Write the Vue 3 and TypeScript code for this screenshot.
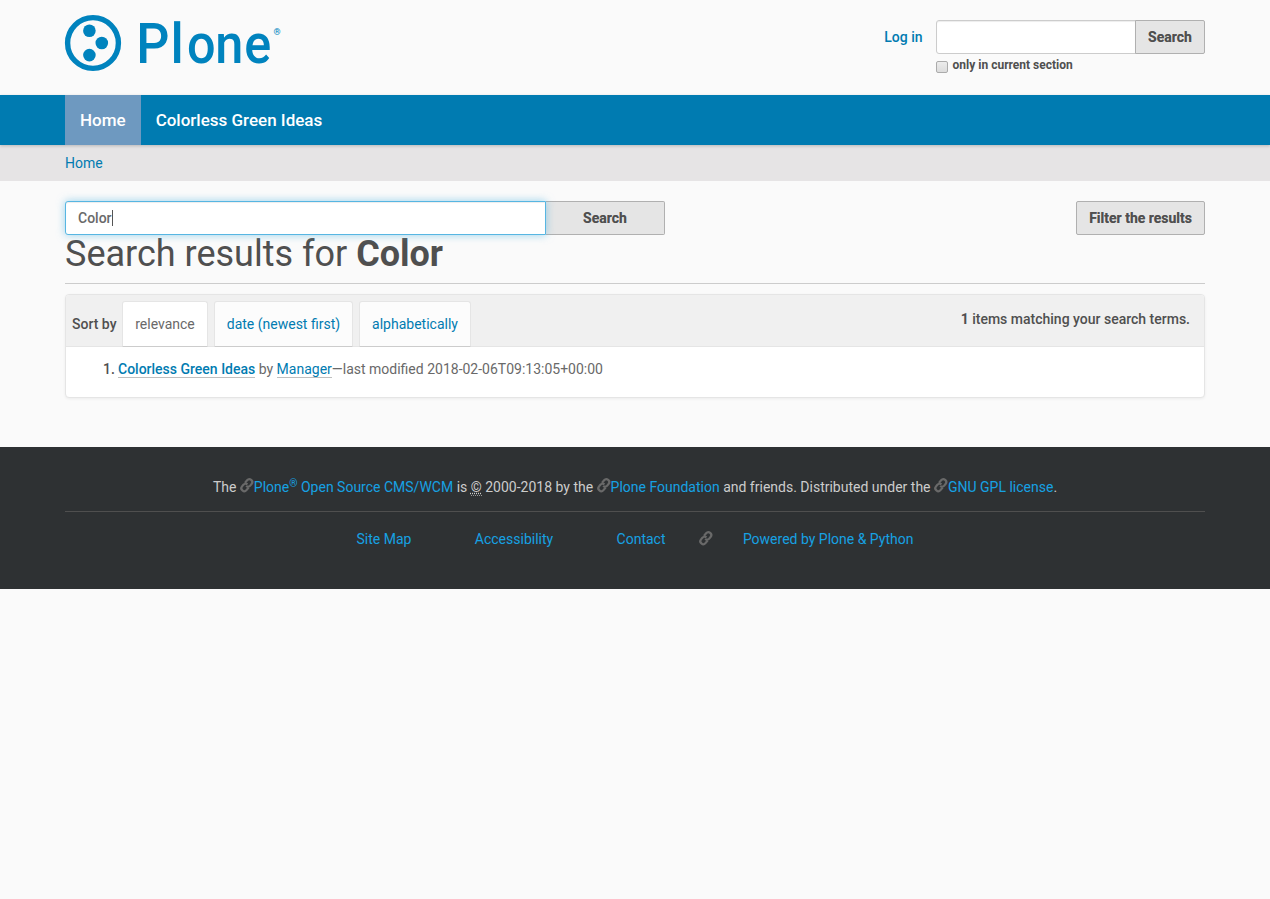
<script setup lang="ts">
import { ref, h } from 'vue'
import type { FunctionalComponent } from 'vue'

const term = 'Color'
const headerQuery = ref('')
const onlySection = ref(false)

const navItems: { label: string; active: boolean }[] = [
  { label: 'Home', active: true },
  { label: 'Colorless Green Ideas', active: false },
]

const sortOptions: { label: string; active: boolean }[] = [
  { label: 'relevance', active: true },
  { label: 'date (newest first)', active: false },
  { label: 'alphabetically', active: false },
]

const LinkIcon: FunctionalComponent = () =>
  h('svg', { class: 'link-icon', viewBox: '0 0 14 14', width: 14, height: 14, fill: 'none', stroke: '#696969', 'stroke-width': 1.9 }, [
    h('g', { transform: 'translate(6.8 6.2) rotate(40) scale(1.16)' }, [
      h('path', { d: 'M-2.5 -.5V-3.4A2.5 2.5 0 0 1 2.5 -3.4V-1.6A2.5 2.5 0 0 1 0 .9' }),
      h('path', { d: 'M2.5 .5V3.4A2.5 2.5 0 0 1 -2.5 3.4V1.6A2.5 2.5 0 0 1 0 -.9' }),
    ]),
  ])
</script>

<template>
  <div class="page">
    <header class="container header">
      <svg class="logo" width="220" height="60" viewBox="0 0 220 60" role="img" aria-label="Plone">
        <circle cx="28" cy="30" r="25.4" fill="none" stroke="#0083be" stroke-width="5.4" />
        <circle cx="24.4" cy="17.8" r="6.3" fill="#0083be" />
        <circle cx="36.8" cy="30" r="6.3" fill="#0083be" />
        <circle cx="24.4" cy="42.1" r="6.3" fill="#0083be" />
        <text class="logo-text" transform="scale(.93 1)" x="76.6 113.4" y="50">Pl</text>
        <text class="logo-text" transform="scale(.9 1)" x="135.6 167 199.3" y="50">one</text>
        <text class="logo-mark" x="208.4" y="22">®</text>
      </svg>
      <div class="tools">
        <a class="login">Log in</a>
        <form class="site-search" @submit.prevent>
          <div class="group">
            <input v-model="headerQuery" class="field" type="text" />
            <button class="btn attached">Search</button>
          </div>
          <label class="only"><span class="check" :class="{ on: onlySection }" @click="onlySection = !onlySection"></span>only in current section</label>
        </form>
      </div>
    </header>

    <nav class="nav">
      <div class="container nav-row">
        <a v-for="n in navItems" :key="n.label" class="nav-item" :class="{ active: n.active }">{{ n.label }}</a>
      </div>
    </nav>

    <div class="crumbs"><div class="container"><a>Home</a></div></div>

    <main class="container main">
      <div class="search-row">
        <div class="search-box">
          <div class="field focused">{{ term }}<i class="caret"></i></div>
          <button class="btn attached wide">Search</button>
        </div>
        <button class="btn">Filter the results</button>
      </div>
      <h1>Search results for <strong>{{ term }}</strong></h1>

      <section class="panel">
        <div class="panel-head">
          <span class="sort-label">Sort by</span>
          <a v-for="s in sortOptions" :key="s.label" class="tab" :class="{ active: s.active }">{{ s.label }}</a>
          <span class="count"><b>1</b> items matching your search terms.</span>
        </div>
        <div class="result">
          <span class="num">1.</span>
          <div><a class="title">Colorless Green Ideas</a> by <a>Manager</a>—last modified 2018-02-06T09:13:05+00:00</div>
        </div>
      </section>
    </main>

    <footer class="footer">
      <div class="container">
        <p class="legal">The <LinkIcon /><a>Plone<sup>®</sup> Open Source CMS/WCM</a> is <abbr>©</abbr> 2000-2018 by the <LinkIcon /><a>Plone Foundation</a> and friends. Distributed under the <LinkIcon /><a>GNU GPL license</a>.</p>
        <div class="links">
          <a>Site Map</a><a>Accessibility</a><a>Contact</a><LinkIcon /><a>Powered by Plone &amp; Python</a>
        </div>
      </div>
    </footer>
  </div>
</template>

<style>
html, body { background: #fafafa; }
.link-icon { vertical-align: -1px; flex: none; overflow: visible; }
</style>

<style scoped>
* { box-sizing: border-box; }
.page { font: 400 14px/20px Roboto, "Liberation Sans", sans-serif; color: #696969; }
.container { width: 1140px; margin: 0 auto; }
a { color: #007bb1; text-decoration: none; cursor: pointer; }
.header { height: 95px; display: flex; justify-content: space-between; align-items: flex-start; }
.logo { margin-top: 13px; overflow: visible; }
.logo-text { font: 500 56px Roboto, sans-serif; fill: #0083be; }
.logo-mark { font: 500 9px Roboto, sans-serif; fill: #0083be; }
.tools { display: flex; padding-top: 20px; }
.login { font-weight: 500; margin: 7px 13.5px 0 0; }
.group, .search-box { display: flex; }
.field { height: 34px; border: 1px solid #ccc; border-radius: 3px 0 0 3px; background: #fff; box-shadow: inset 0 1px 1px rgba(0,0,0,.075); outline: none; font: 500 14px/20px Roboto, sans-serif; color: #696969; padding: 6px 12px; }
.site-search .field { width: 200px; margin-right: -1px; }
.btn { height: 34px; padding: 0 12px; border: 1px solid #b0b0b0; border-radius: 2px; background: #e5e5e5; color: #4f4f4f; font: 700 14px/20px Roboto, sans-serif; text-shadow: 0 0 .5px rgba(79,79,79,.6); white-space: nowrap; }
.attached { border-radius: 0 2px 2px 0; }
.site-search .btn { width: 70px; padding: 0; }
.only { display: flex; align-items: flex-start; font-size: 12px; line-height: 17px; font-weight: 700; color: #4f4f4f; margin-top: 3px; }
.check { width: 12px; height: 12px; margin: 4px 4.6px 0 0; border: 1px solid #ababab; border-radius: 2px; background: linear-gradient(#ececec, #dcdcdc); }
.check.on { background: #007bb1; }
.nav { height: 50px; background: #007bb1; box-shadow: 0 1px 3px rgba(0,0,0,.2); position: relative; }
.nav-row { display: flex; }
.nav-item { height: 50px; padding: 15px; font-size: 17px; font-weight: 500; color: #fff; }
.nav-item.active { background: #6e99c0; }
.crumbs { height: 36px; padding-top: 8px; background: #e6e4e5; }
.main { padding-top: 20px; }
.search-row { display: flex; justify-content: space-between; }
.focused { width: 481px; border-color: #57b6e2; box-shadow: inset 0 1px 1px rgba(0,0,0,.075), 0 0 8px rgba(87,182,226,.6); display: flex; position: relative; }
.caret { width: 1px; height: 16px; background: #555; margin-top: 2px; }
.wide { width: 119px; border-left: 0; }
h1 { margin: 0; height: 49px; border-bottom: 1px solid #ccc; font-size: 36px; line-height: 38px; font-weight: 400; color: #4f4f4f; }
h1 strong { font-weight: 700; }
.panel { margin-top: 10px; height: 104px; border: 1px solid #e5e5e5; border-radius: 4px; background: #fff; box-shadow: 0 1px 3px rgba(0,0,0,.06); }
.panel-head { height: 52px; display: flex; padding: 6px 15px 0 6px; background: #f0f0f0; border-bottom: 1px solid #e5e5e5; border-radius: 3px 3px 0 0; }
.sort-label { font-weight: 500; color: #4f4f4f; margin: 13px 5.6px 0 0; }
.tab { height: 46px; padding: 12px 12.1px; border: 1px solid #e5e5e5; border-bottom-color: #ccc; border-radius: 3px 3px 0 0; background: #fcfcfc; margin-right: 5.8px; }
.tab.active { color: #696969; background: #fff; }
.count { margin: 8px -1px 0 auto; font-weight: 500; color: #4f4f4f; }
.count b { font-weight: 700; }
.result { display: flex; padding: 12px 0 0 37px; }
.num { font-weight: 500; color: #4f4f4f; width: 15px; }
.result a { border-bottom: 1px solid #bfbfbf; }
.title { font-weight: 500; }
.footer { margin-top: 49px; height: 142px; background: #2e3133; color: #ccc; text-align: center; padding-top: 30px; }
.footer a { color: #16a1e3; }
.legal { margin: 0; height: 35px; border-bottom: 1px solid #4f4f4f; white-space: nowrap; }
sup { font-size: 75%; line-height: 0; position: relative; vertical-align: baseline; top: -.5em; }
abbr { border-bottom: 1px dotted #999; text-decoration: underline dotted; }
.links { display: flex; justify-content: center; align-items: center; padding-top: 17px; }
.links a { margin: 0 31.7px; }
.links .link-icon { margin: 0 -2px 0 2px; }
</style>
